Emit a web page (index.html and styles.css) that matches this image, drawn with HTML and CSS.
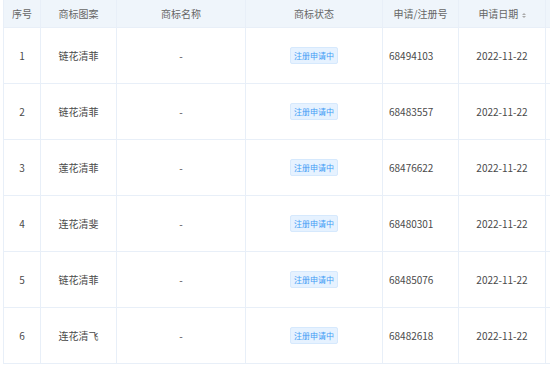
FILE: index.html
```html
<!DOCTYPE html>
<html lang="zh-CN">
<head>
    <meta charset="UTF-8">
    <meta name="viewport" content="width=device-width, initial-scale=1.0">
    <title>商标列表</title>
    <link rel="stylesheet" href="styles.css">
</head>
<body>
    <div class="wrap">
        <table class="tm-table">
            <colgroup>
                <col class="c-no">
                <col class="c-pic">
                <col class="c-name">
                <col class="c-status">
                <col class="c-reg">
                <col class="c-date">
                <col class="c-more">
            </colgroup>
            <thead>
                <tr>
                    <th>序号</th>
                    <th>商标图案</th>
                    <th>商标名称</th>
                    <th>商标状态</th>
                    <th>申请/注册号</th>
                    <th>申请日期 <span class="sort"><i class="up"></i><i class="down"></i></span></th>
                    <th></th>
                </tr>
            </thead>
            <tbody id="rows"></tbody>
        </table>
    </div>
    <script>
        const data = [
            ['1', '链花清菲', '68494103'],
            ['2', '链花清菲', '68483557'],
            ['3', '莲花清菲', '68476622'],
            ['4', '连花清斐', '68480301'],
            ['5', '链花清菲', '68485076'],
            ['6', '连花清飞', '68482618']
        ];
        const tbody = document.getElementById('rows');
        data.forEach(function(r) {
            const tr = document.createElement('tr');
            tr.innerHTML =
                '<td>' + r[0] + '</td>' +
                '<td>' + r[1] + '</td>' +
                '<td>-</td>' +
                '<td><span class="tag">注册申请中</span></td>' +
                '<td class="left">' + r[2] + '</td>' +
                '<td>2022-11-22</td>' +
                '<td></td>';
            tbody.appendChild(tr);
        });
    </script>
</body>
</html>
```

FILE: styles.css
```css
body {
    margin: 0;
    font-family: "Noto Sans CJK SC", "Noto Sans", sans-serif;
    font-size: 10px;
    color: #555;
    background: #fff;
    overflow: hidden;
}
.wrap {
    width: 550px;
    overflow: hidden;
}
.tm-table {
    margin-left: 3px;
    width: 600px;
    border-collapse: collapse;
    table-layout: fixed;
}
.c-no { width: 37px; }
.c-pic { width: 76px; }
.c-name { width: 129px; }
.c-status { width: 137px; }
.c-reg { width: 76px; }
.c-date { width: 87px; }
.c-more { width: 58px; }

.tm-table th,
.tm-table td {
    border: 1px solid #e8eff8;
    text-align: center;
    padding: 0;
    white-space: nowrap;
}
.tm-table th {
    background: #eff5fb;
    color: #666;
    font-weight: normal;
    height: 27px;
    border-top: none;
}
.tm-table td {
    height: 55px;
    color: #4a4a4a;
}
.tm-table td.left {
    text-align: left;
    padding-left: 6px;
}
.tag {
    display: inline-block;
    height: 15px;
    line-height: 15px;
    padding: 0 3px;
    font-size: 8px;
    color: #3f9cf5;
    background: #e6f2ff;
    border: 1px solid #d6e9fd;
    border-radius: 2px;
}
.sort {
    display: inline-flex;
    flex-direction: column;
    gap: 1px;
    vertical-align: middle;
    margin-left: 1px;
}
.sort i {
    width: 0;
    height: 0;
    border-left: 2px solid transparent;
    border-right: 2px solid transparent;
}
.sort .up { border-bottom: 2px solid #aaa; }
.sort .down { border-top: 2px solid #aaa; }
```
